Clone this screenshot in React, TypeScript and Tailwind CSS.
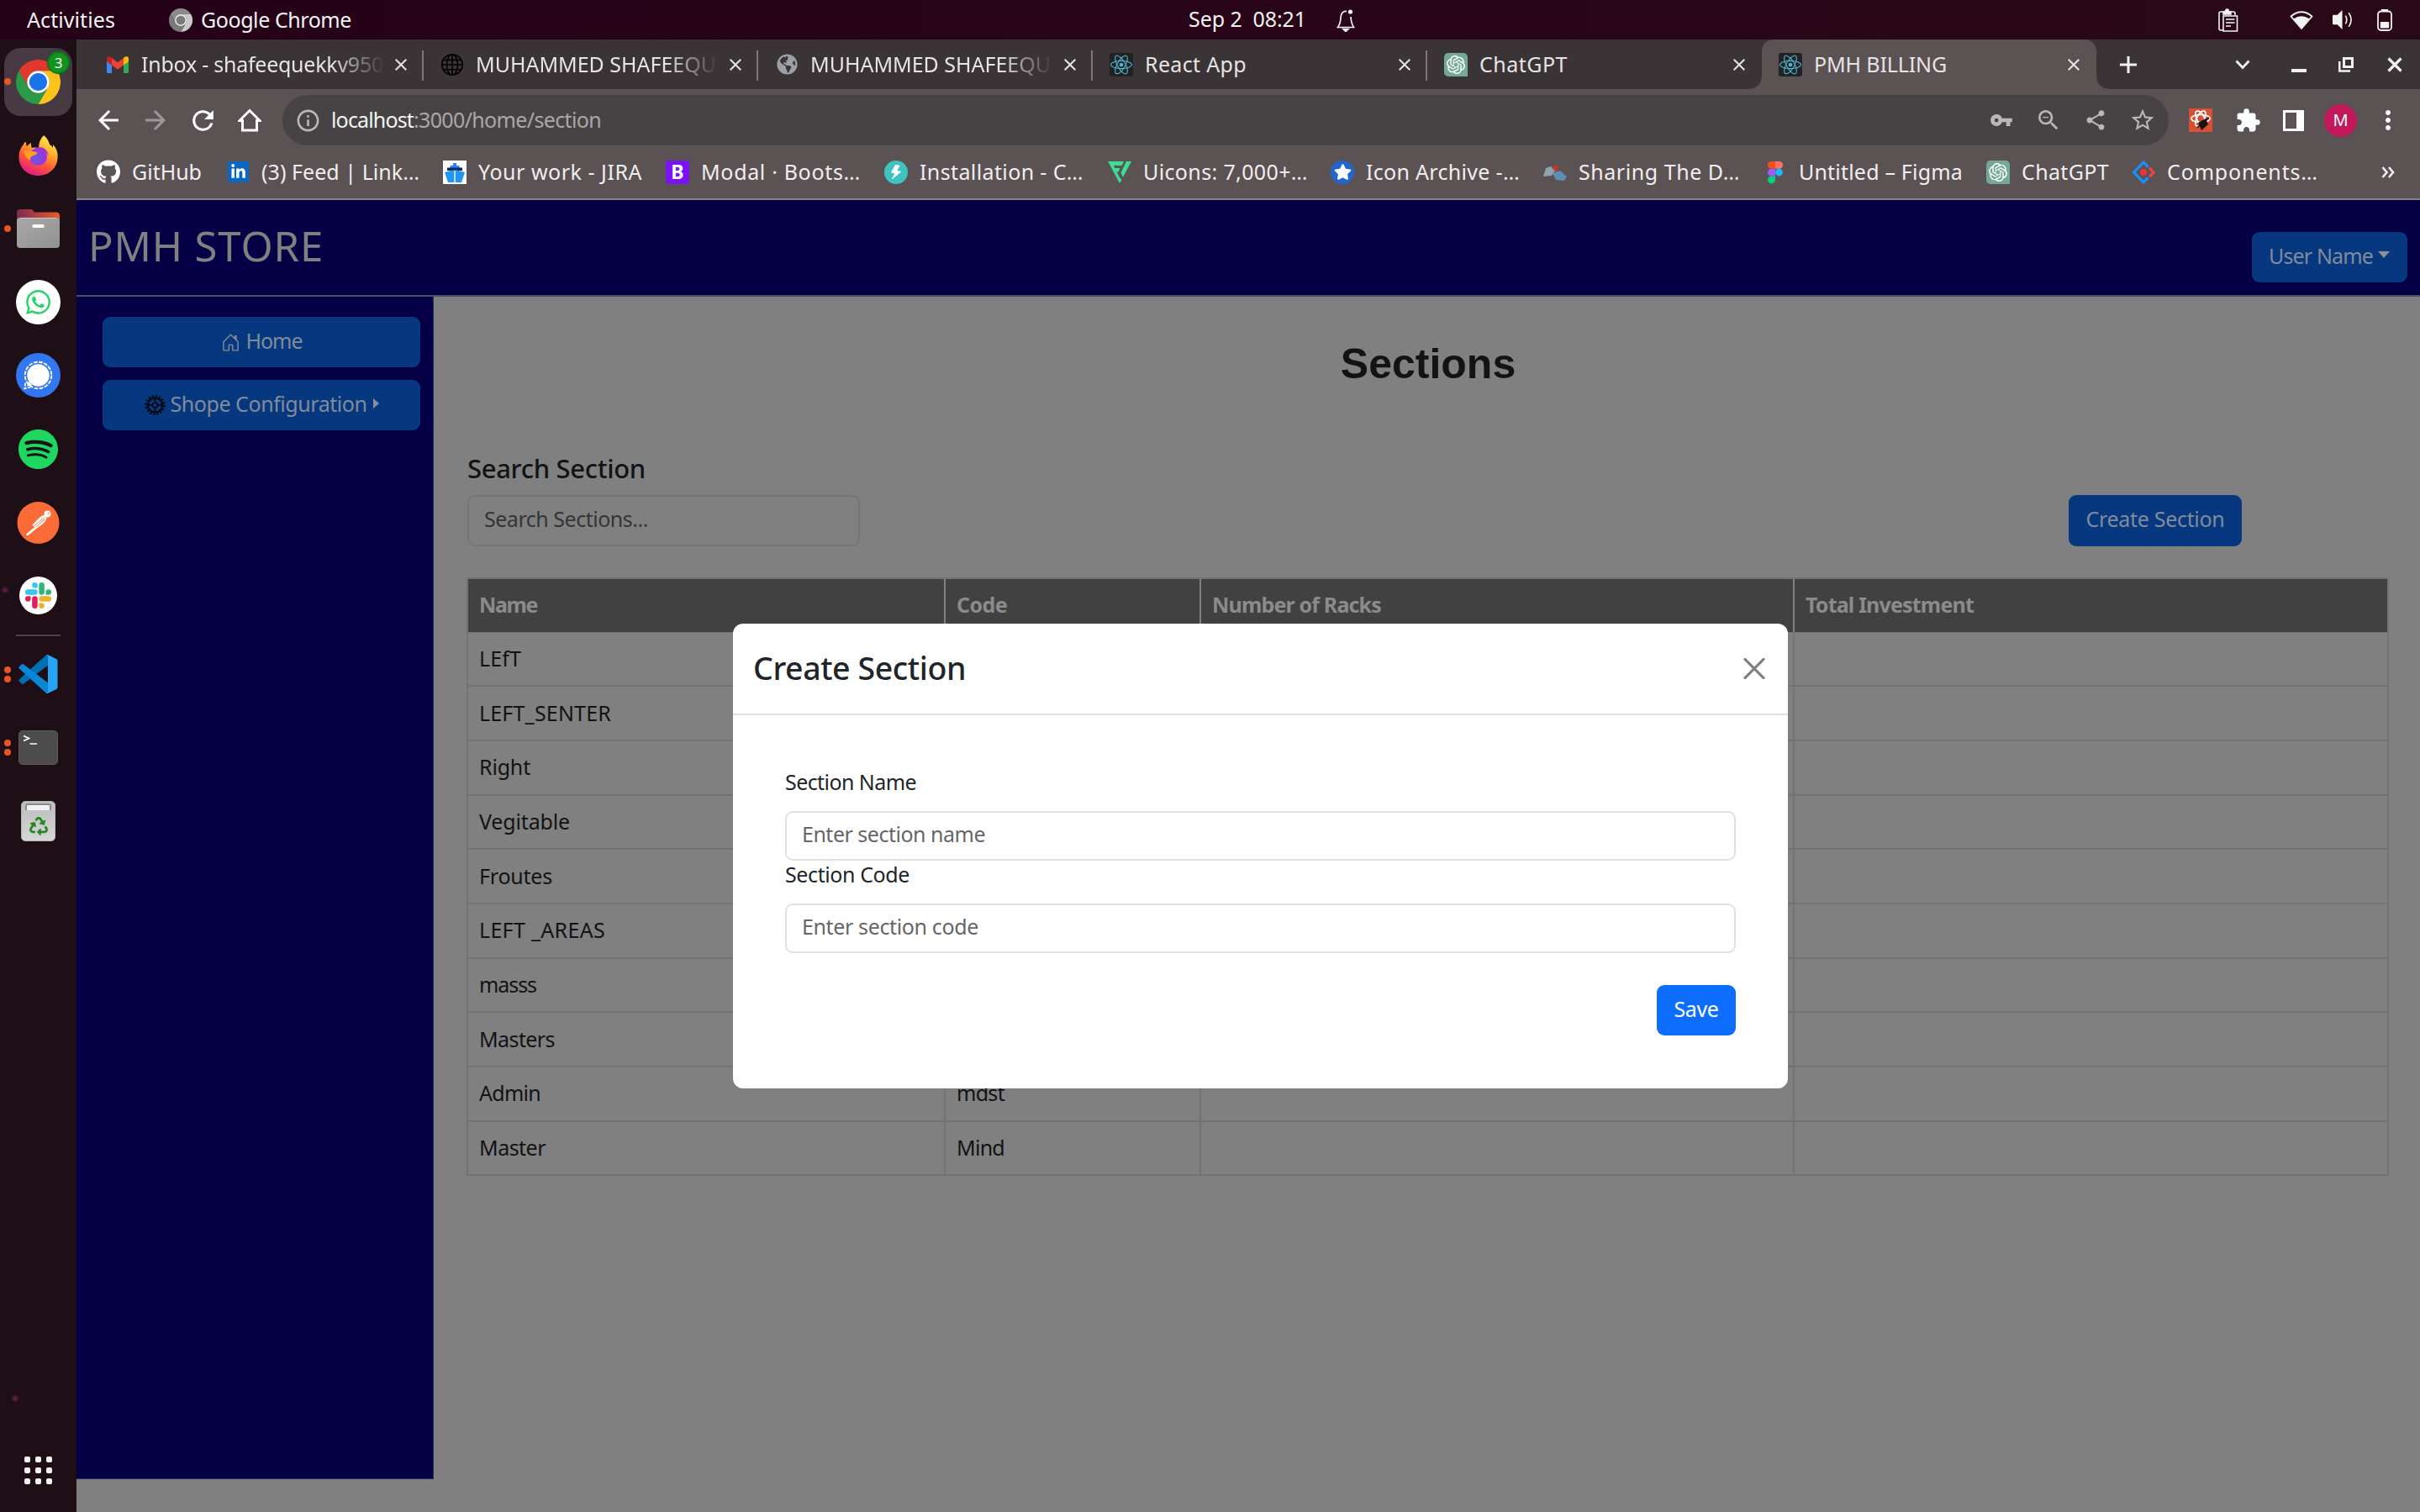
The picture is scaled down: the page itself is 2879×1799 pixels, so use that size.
import React, { useLayoutEffect, useRef, useState } from "react";
import { FaGithub, FaReact, FaRecycle, FaStar, FaLinkedinIn, FaGlobeAmericas, FaWhatsapp } from "react-icons/fa";
import { SiOpenai, SiSpotify } from "react-icons/si";
import { BsGlobe, BsFillLightningFill, BsHouseDoor } from "react-icons/bs";
import {
  MdArrowBack, MdArrowForward, MdRefresh, MdInfoOutline, MdVpnKey, MdZoomOut, MdShare,
  MdStarBorder, MdExtension, MdMoreVert, MdClose,
} from "react-icons/md";

/** Text whose letter spacing is tuned so the run takes exactly `w` pixels. */
function Fit({ w, className = "", children }: { w: number; className?: string; children: string }) {
  const ref = useRef<HTMLSpanElement>(null);
  const [ls, setLs] = useState(0);
  useLayoutEffect(() => {
    const el = ref.current;
    if (!el) return;
    el.style.letterSpacing = "0px";
    setLs((w - el.getBoundingClientRect().width) / children.length);
  }, [w, children]);
  return (
    <span ref={ref} className={"inline-block shrink-0 whitespace-pre " + className} style={{ letterSpacing: `${ls}px` }}>
      {children}
    </span>
  );
}

function ChromeLogo({ className = "", mono = false }: { className?: string; mono?: boolean }) {
  return (
    <svg viewBox="0 0 48 48" className={className}>
      <path d="M3.2 12A24 24 0 0 1 44.8 12H24A12 12 0 0 0 13.6 30Z" fill={mono ? "#8b8b8b" : "#e0382c"} />
      <path d="M44.8 12A24 24 0 0 1 24 48L34.4 30A12 12 0 0 0 24 12Z" fill={mono ? "#c9c9c9" : "#fcc31b"} />
      <path d="M24 48A24 24 0 0 1 3.2 12L13.6 30A12 12 0 0 0 34.4 30Z" fill={mono ? "#7a7a7a" : "#2a9a48"} />
      <circle cx="24" cy="24" r="12" fill="#fff" />
      <circle cx="24" cy="24" r="9.6" fill={mono ? "#7a7a7a" : "#1a73e8"} />
    </svg>
  );
}

function Firefox() {
  return (
    <svg viewBox="0 0 47 48" className="w-[47px] h-[48px]">
      <defs>
        <linearGradient id="ffa" x1=".8" y1="0" x2=".3" y2="1">
          <stop offset="0" stopColor="#fff44f" /><stop offset=".35" stopColor="#ffb02e" />
          <stop offset=".65" stopColor="#ff5a36" /><stop offset="1" stopColor="#e31587" />
        </linearGradient>
        <radialGradient id="ffb" cx=".4" cy=".6"><stop offset="0" stopColor="#6a5be0" /><stop offset="1" stopColor="#9b35d8" /></radialGradient>
      </defs>
      <path d="M30 0C34 3 36 7 37 11C39 12 40 13 41 15L41 11C46 16 47 22 46.500 27C46 39 36 48 23.500 48C10 48 0 38 .5 25C.7 19 3 14 6 11C6 10 7 8 9 8C9 11 9.500 12 10 13C12 11 13 10 15 9C15 12 15 13 16 15C20 14 22 15 24 15C24 9 26 4 30 0Z" fill="url(#ffa)" />
      <circle cx="23.500" cy="25.500" r="10.500" fill="url(#ffb)" />
      <path d="M6 19C10 17 16 19 22 20C23 22 21 23 18 24C15 25 14 26 14 30C10 28 8 24 6 19Z" fill="#ffa01e" />
      <path d="M20 15C28 12 35 17 36 25C34 21 32 20 30 19C26 18 22 18 20 15Z" fill="#a432d6" />
    </svg>
  );
}

function Files() {
  return (
    <svg viewBox="0 0 51 46" className="w-[51px] h-[46px]">
      <defs>
        <linearGradient id="fla"><stop offset="0" stopColor="#7d2a55" /><stop offset="1" stopColor="#e95b26" /></linearGradient>
        <linearGradient id="flb" x2="1" y2="1"><stop offset="0" stopColor="#a8a8a8" /><stop offset="1" stopColor="#919191" /></linearGradient>
      </defs>
      <path d="M0 4Q0 0 4 0H17Q19 0 21 3.500H47Q51 3.500 51 8V20H0Z" fill="url(#fla)" />
      <rect x="0" y="10" width="51" height="36" rx="4" fill="url(#flb)" />
      <path d="M4 10.500H47" stroke="#c9c9c9" strokeWidth="1" />
      <rect x="18.500" y="18" width="14" height="4" rx="1.500" fill="#fff" />
    </svg>
  );
}

function Signal() {
  return (
    <svg viewBox="0 0 52 52" className="w-[53px] h-[53px]">
      <circle cx="26" cy="26" r="26" fill="#3276f0" />
      <circle cx="26" cy="26" r="15.500" fill="none" stroke="#fff" strokeWidth="1.800" strokeDasharray="4.600 1.500" />
      <path d="M11 35L10 41.500L17 40" fill="none" stroke="#fff" strokeWidth="1.700" strokeDasharray="4 1.200" />
      <path d="M14.500 33L12.800 39L19 37.500Z" fill="#fff" />
      <circle cx="26" cy="26" r="13" fill="#fff" />
    </svg>
  );
}

function Postman() {
  return (
    <svg viewBox="0 0 50 50" className="w-[51px] h-[50px]">
      <circle cx="25" cy="25" r="25" fill="#f96b37" />
      <circle cx="36" cy="14.500" r="4" fill="#fff" />
      <path d="M36 14.500L39 12.500" stroke="#f96b37" strokeWidth="1" />
      <path d="M32 16L35 19.500C34 24 29 28 24 31L13 40H10.500L11 38L21 30L18 28C22 23 27 17 32 16Z" fill="#fff" />
      <path d="M20.500 28.500L32 19M22.500 30L33 20.500" stroke="#f96b37" strokeWidth=".9" />
    </svg>
  );
}

function Slack() {
  return (
    <span className="flex h-[45px] w-[45px] items-center justify-center rounded-full bg-white">
      <svg viewBox="0 0 24 24" className="h-[31px] w-[31px]">
        <path fill="#E01E5A" d="M5.042 15.165a2.528 2.528 0 0 1-2.520 2.523A2.528 2.528 0 0 1 0 15.165a2.527 2.527 0 0 1 2.522-2.520h2.520v2.520zM6.313 15.165a2.527 2.527 0 0 1 2.521-2.520 2.527 2.527 0 0 1 2.521 2.520v6.313A2.528 2.528 0 0 1 8.834 24a2.528 2.528 0 0 1-2.521-2.522v-6.313z" />
        <path fill="#36C5F0" d="M8.834 5.042a2.528 2.528 0 0 1-2.521-2.520A2.528 2.528 0 0 1 8.834 0a2.528 2.528 0 0 1 2.521 2.522v2.520H8.834zM8.834 6.313a2.528 2.528 0 0 1 2.521 2.521 2.528 2.528 0 0 1-2.521 2.521H2.522A2.528 2.528 0 0 1 0 8.834a2.528 2.528 0 0 1 2.522-2.521h6.312z" />
        <path fill="#2EB67D" d="M18.956 8.834a2.528 2.528 0 0 1 2.522-2.521A2.528 2.528 0 0 1 24 8.834a2.528 2.528 0 0 1-2.522 2.521h-2.522V8.834zM17.688 8.834a2.528 2.528 0 0 1-2.523 2.521 2.527 2.527 0 0 1-2.520-2.521V2.522A2.527 2.527 0 0 1 15.165 0a2.528 2.528 0 0 1 2.523 2.522v6.312z" />
        <path fill="#ECB22E" d="M15.165 18.956a2.528 2.528 0 0 1 2.523 2.522A2.528 2.528 0 0 1 15.165 24a2.527 2.527 0 0 1-2.520-2.522v-2.522h2.520zM15.165 17.688a2.527 2.527 0 0 1-2.520-2.523 2.526 2.526 0 0 1 2.520-2.520h6.313A2.527 2.527 0 0 1 24 15.165a2.528 2.528 0 0 1-2.522 2.523h-6.313z" />
      </svg>
    </span>
  );
}

function VSCode() {
  return (
    <svg viewBox="0 0 100 100" className="h-[46px] w-[47px]">
      <path fill="#0070b5" d="M96.500 10.800L75.900.9a6.200 6.200 0 0 0-7.100 1.200L1.300 63.600a4.170 4.170 0 0 0 0 6.200l5.500 5a4.170 4.170 0 0 0 5.300.2l81.200-61.600c2.700-2.100 6.700-.1 6.700 3.300v-.2a6.250 6.250 0 0 0-3.500-5.700z" />
      <path fill="#0a86d8" d="M96.500 89.200L75.900 99.100a6.200 6.200 0 0 1-7.100-1.200L1.300 36.400a4.170 4.170 0 0 1 0-6.200l5.500-5a4.170 4.170 0 0 1 5.300-.2l81.200 61.600c2.700 2.100 6.700.1 6.700-3.300v.2a6.250 6.250 0 0 1-3.500 5.700z" />
      <path fill="#27a5f5" d="M75.900 99.100a6.200 6.200 0 0 1-7.100-1.200c2.300 2.300 6.200.7 6.200-2.600V4.700c0-3.300-3.900-4.900-6.200-2.600a6.200 6.200 0 0 1 7.100-1.200l20.600 9.900a6.250 6.250 0 0 1 3.500 5.600v67.200a6.250 6.250 0 0 1-3.500 5.600z" />
    </svg>
  );
}

function Terminal() {
  return (
    <svg viewBox="0 0 47 41" className="h-[41px] w-[47px]">
      <rect x=".5" y=".5" width="46" height="40" rx="4.500" fill="#4c4c4c" stroke="#5c5c5c" />
      <path d="M6 6.500L12.500 9.500L6 12.500M13.500 16H22" fill="none" stroke="#fff" strokeWidth="1.700" />
    </svg>
  );
}

function Trash() {
  return (
    <span className="flex h-[48px] w-[41px] flex-col items-center rounded-[5px] border border-[#b5b5b5] bg-gradient-to-b from-[#bdbdbd] to-[#d6d6d6]">
      <span className="mt-[2px] h-[8px] w-[31px] rounded-t-[3px] border-2 border-b-0 border-[#8b8b8b] bg-[#f2f2f2]" />
      <FaRecycle className="mt-[8px] h-[22px] w-[22px] text-[#23891f]" />
    </span>
  );
}

const dock: { icon: React.ReactNode; dots: number; active?: boolean }[] = [
  { icon: <ChromeLogo className="h-[53px] w-[53px]" />, dots: 1, active: true },
  { icon: <Firefox />, dots: 0 },
  { icon: <Files />, dots: 1 },
  { icon: <span className="flex h-[53px] w-[53px] items-center justify-center rounded-full bg-white"><FaWhatsapp className="h-[33px] w-[33px] text-[#25d366]" /></span>, dots: 0 },
  { icon: <Signal />, dots: 0 },
  { icon: <span className="flex h-[47px] w-[47px] items-center justify-center rounded-full bg-[#191414]"><SiSpotify className="h-[47px] w-[47px] text-[#1ed760]" /></span>, dots: 0 },
  { icon: <Postman />, dots: 0 },
  { icon: <Slack />, dots: 0 },
  { icon: <VSCode />, dots: 2 },
  { icon: <Terminal />, dots: 2 },
  { icon: <Trash />, dots: 0 },
];

function DockItem({ item }: { item: (typeof dock)[number] }) {
  return (
    <div className="relative flex h-[87.4px] w-[91px] shrink-0 items-center justify-center">
      <div className={item.active ? "flex h-[81px] w-[81px] items-center justify-center rounded-[20px] bg-[#483a43]" : "flex items-center justify-center"}>{item.icon}</div>
      <div className="absolute inset-y-0 left-[5px] flex flex-col justify-center gap-[3px]">
        {Array.from({ length: item.dots }, (_, i) => <span key={i} className="h-[8px] w-[8px] rounded-full bg-[#ea5622]" />)}
      </div>
      {item.active && (
        <span className="absolute left-[56px] top-[7px] flex h-[27px] w-[27px] items-center justify-center rounded-full border-2 border-[#0b7a1c] bg-[#12941f] text-[17px] leading-none text-white shadow">3</span>
      )}
    </div>
  );
}

function ReactIcon() {
  return <span className="flex h-[28px] w-[28px] items-center justify-center rounded-[3px] bg-[#222]"><FaReact className="h-[26px] w-[26px] text-[#4fb8d6]" /></span>;
}
function OpenAiIcon() {
  return <span className="flex h-[28px] w-[28px] items-center justify-center rounded-[5px] rounded-br-none bg-[#74a898]"><SiOpenai className="h-[22px] w-[22px] text-white" /></span>;
}
function Gmail() {
  return (
    <svg viewBox="0 0 26 20" className="h-[20px] w-[26px]">
      <path d="M0 3V18.500Q0 20 1.500 20H6V8Z" fill="#4285f4" />
      <path d="M26 3V18.500Q26 20 24.500 20H20V8Z" fill="#34a853" />
      <path d="M20 2L22 .6Q26-1 26 3V6L20 10.500Z" fill="#fbbc04" />
      <path d="M6 2L4 .6Q0-1 0 3V6L6 10.500Z" fill="#c5221f" />
      <path d="M6 2L13 7.300L20 2V10.500L13 15.700L6 10.500Z" fill="#ea4335" />
    </svg>
  );
}

const tabs: { icon: React.ReactNode; title: string; w: number }[] = [
  { icon: <Gmail />, title: "Inbox - shafeequekkv950", w: 288 },
  { icon: <BsGlobe className="h-[26px] w-[26px] text-black" />, title: "MUHAMMED SHAFEEQU", w: 286 },
  { icon: <FaGlobeAmericas className="h-[25px] w-[25px] text-[#9aa0a6]" />, title: "MUHAMMED SHAFEEQU", w: 286 },
  { icon: <ReactIcon />, title: "React App", w: 121 },
  { icon: <OpenAiIcon />, title: "ChatGPT", w: 105 },
  { icon: <ReactIcon />, title: "PMH BILLING", w: 158 },
];

const bookmarks: { cell: string; icon: React.ReactNode; title: string; w: number }[] = [
  { cell: "w-[154px]", icon: <FaGithub className="h-[29px] w-[29px] text-white" />, title: "GitHub", w: 83 },
  { cell: "w-[258px]", icon: <span className="flex h-[25px] w-[25px] items-center justify-center bg-[#0a66c2]"><FaLinkedinIn className="h-[19px] w-[19px] text-white" /></span>, title: "(3) Feed | Link…", w: 188 },
  {
    cell: "w-[265px]", title: "Your work - JIRA", w: 195,
    icon: (
      <svg viewBox="0 0 28 28" className="h-[28px] w-[28px]"><rect width="28" height="28" fill="#fff" /><path d="M9 6H12V3H16V6H19L20 9H8Z" fill="#2684ff" /><path d="M5 8.500H23V12H5Z" fill="#0b2a5b" /><path d="M2 14L13.300 11V26H6Z" fill="#2196f3" /><path d="M26 14L14.700 11V26H22Z" fill="#2196f3" /></svg>
    ),
  },
  { cell: "w-[260px]", icon: <span className="flex h-[28px] w-[28px] items-center justify-center rounded-[4px] bg-[#7a12f5] text-[23px] font-bold leading-none text-white">B</span>, title: "Modal · Boots…", w: 190 },
  { cell: "w-[266px]", icon: <span className="flex h-[28px] w-[28px] items-center justify-center rounded-full bg-[#3fc3c0]"><BsFillLightningFill className="h-[18px] w-[18px] rotate-12 text-white" /></span>, title: "Installation - C…", w: 195 },
  {
    cell: "w-[265px]", title: "Uicons: 7,000+…", w: 196,
    icon: <svg viewBox="0 0 28 28" className="h-[28px] w-[28px]"><path d="M0 1H19L16.500 6H7L8.200 9H14.500L12.500 13.500H10.500L14.500 21L16.500 23L14 27Z" fill="#3ddc97" /><path d="M22 1H28L18 20L15.500 14.500Z" fill="#3ddc97" /></svg>,
  },
  { cell: "w-[253px]", icon: <span className="flex h-[28px] w-[28px] items-center justify-center rounded-full bg-[#2065d0]"><FaStar className="h-[21px] w-[21px] text-white" /></span>, title: "Icon Archive -…", w: 183 },
  {
    cell: "w-[262px]", title: "Sharing The D…", w: 192,
    icon: <svg viewBox="0 0 28 24" className="h-[24px] w-[28px]"><path d="M0 17L3 7L9 5L14 10L10 16Z" fill="#8fa3b0" /><path d="M11 13L20 10L28 17L25 22L15 21Z" fill="#5d8fb5" /><path d="M14 1L15.500 6L19 4L17 9L20 11L14 10L10 7L13 6Z" fill="#c9342c" /></svg>,
  },
  {
    cell: "w-[265px]", title: "Untitled – Figma", w: 195,
    icon: <svg viewBox="0 0 28 28" className="h-[28px] w-[28px]"><path d="M14 1H9.500a4.500 4.300 0 0 0 0 8.700H14Z" fill="#f24e1e" /><path d="M14 1h4.500a4.500 4.300 0 0 1 0 8.700H14Z" fill="#ff7262" /><path d="M14 9.700H9.500a4.500 4.300 0 0 0 0 8.700H14Z" fill="#a259ff" /><circle cx="18.500" cy="14" r="4.400" fill="#1abcfe" /><path d="M14 18.400H9.500a4.500 4.500 0 1 0 4.500 4.500Z" fill="#0acf83" /></svg>,
  },
  { cell: "w-[173px]", icon: <OpenAiIcon />, title: "ChatGPT", w: 104 },
  {
    cell: "w-[240px]", title: "Components…", w: 180,
    icon: <svg viewBox="0 0 28 28" className="h-[28px] w-[28px]"><path d="M19.500 7.500L14 2.200L2.500 14L14 25.800L19.500 20.500" fill="none" stroke="#1890ff" strokeWidth="3.200" /><path d="M21 8.500L26 14L21 19.500" fill="none" stroke="#f5404a" strokeWidth="3.200" /><circle cx="14" cy="14" r="3.900" fill="#f5303a" /></svg>,
  },
];

const columns: { cell: string; title: string; w: number }[] = [
  { cell: "w-[568px]", title: "Name", w: 69 },
  { cell: "w-[304px]", title: "Code", w: 60 },
  { cell: "w-[706px]", title: "Number of Racks", w: 201 },
  { cell: "w-[707px]", title: "Total Investment", w: 200 },
];

const rows: { name: string; w: number; code?: string; cw?: number }[] = [
  { name: "LEfT", w: 50 },
  { name: "LEFT_SENTER", w: 157 },
  { name: "Right", w: 61 },
  { name: "Vegitable", w: 108 },
  { name: "Froutes", w: 87 },
  { name: "LEFT _AREAS", w: 150 },
  { name: "masss", w: 68 },
  { name: "Masters", w: 90 },
  { name: "Admin", w: 73, code: "mdst", cw: 57 },
  { name: "Master", w: 79, code: "Mind", cw: 57 },
];

function TopBar() {
  return (
    <div className="flex h-[47px] shrink-0 items-center bg-gradient-to-r from-[#250118] to-[#2a0917] text-[25px] leading-none text-[#f2f2f2]">
      <div className="flex w-[1414px] items-center pl-[32px]">
        <Fit w={105}>Activities</Fit>
        <ChromeLogo mono className="ml-[64px] h-[28px] w-[28px]" />
        <Fit w={179} className="ml-[10px]">Google Chrome</Fit>
      </div>
      <Fit w={140} className="pb-[3px]">{"Sep 2  08:21"}</Fit>
      <svg viewBox="0 0 22 28" className="ml-[36px] h-[28px] w-[22px]" fill="none" stroke="#f2f2f2" strokeWidth="1.700">
        <path d="M12 3.500Q5.500 3 5 11Q4.800 18 1.500 22.500H20.500Q17.500 18 17 10" /><path d="M8 24.500H14L11 27.500Z" fill="#f2f2f2" /><circle cx="16.500" cy="4" r="2.600" fill="#f2f2f2" stroke="none" />
      </svg>
      <div className="ml-auto flex items-center pr-[33px]">
        <svg viewBox="0 0 24 28" className="h-[28px] w-[24px]" fill="none" stroke="#f2f2f2" strokeWidth="1.600">
          <path d="M6 26H3Q1 26 1 24V6Q1 4 3 4H18Q20 4 20 6V8" /><path d="M6 9H22.500V27H6ZM9 13H19.500M9 17H19.500M9 21H15" /><path d="M6 7V4H8.500Q8.500 1 10.500 1T12.500 4H15V7Z" fill="#f2f2f2" />
        </svg>
        <svg viewBox="0 0 28 22" className="ml-[61px] h-[24px] w-[28px]"><path d="M1.500 6.500Q14-4 26.500 6.500L14 21Z" fill="none" stroke="#f2f2f2" strokeWidth="1.800" strokeLinejoin="round" /><path d="M4.500 9.500Q14 3 23.500 9.500L14 21Z" fill="#f2f2f2" /></svg>
        <svg viewBox="0 0 28 26" className="ml-[22px] h-[25px] w-[27px]" fill="none" stroke="#f2f2f2" strokeWidth="1.700"><path d="M1 8Q1 7 2 7H7L13 1V25L7 19H2Q1 19 1 18Z" fill="#f2f2f2" stroke="none" /><path d="M17 8Q20 13 17 18M21 4.500Q27 13 21 21.500" /></svg>
        <svg viewBox="0 0 18 26" className="ml-[27px] h-[26px] w-[18px]"><rect x="5" y="0" width="8" height="3" fill="#f2f2f2" /><rect x="1" y="2.500" width="16" height="22.500" rx="3.500" fill="none" stroke="#f2f2f2" strokeWidth="1.800" /><rect x="3.800" y="15" width="10.400" height="7.500" rx="1" fill="#f2f2f2" /></svg>
      </div>
    </div>
  );
}

function TabStrip() {
  return (
    <div className="flex h-[59px] shrink-0 items-center bg-[#3a3436] pl-[15px] text-[25px] leading-none text-[#e6e4e4]">
      {tabs.map((t, i) => {
        const active = i === 5;
        return (
          <div key={i} className={"relative flex h-[59px] w-[398px] shrink-0 items-center pl-[19px] " + (active ? "rounded-t-[14px] bg-[#5b5254]" : "")}>
            <span className="flex w-[30px] shrink-0 items-center justify-center">{t.icon}</span>
            <span className={"ml-[13px] flex h-[40px] w-[289px] shrink-0 items-center " + (i < 3 ? "[mask-image:linear-gradient(to_right,black_78%,transparent)]" : "")}>
              <Fit w={t.w}>{t.title}</Fit>
            </span>
            <MdClose className="ml-[8px] h-[24px] w-[24px] shrink-0" />
            {i < 4 && <span className="absolute right-0 top-[13px] h-[36px] w-[2px] bg-[#7b7677]" />}
            {active && (
              <>
                <span className="absolute -left-[14px] bottom-0 h-[14px] w-[14px] bg-[radial-gradient(circle_at_0_0,#3a3436_13px,#5b5254_14px)]" />
                <span className="absolute -right-[14px] bottom-0 h-[14px] w-[14px] bg-[radial-gradient(circle_at_100%_0,#3a3436_13px,#5b5254_14px)]" />
              </>
            )}
          </div>
        );
      })}
      <svg viewBox="0 0 22 22" className="ml-[27px] h-[22px] w-[22px]"><path d="M11 1V21M1 11H21" stroke="#f0f0f0" strokeWidth="3" /></svg>
      <svg viewBox="0 0 18 12" className="ml-[116px] h-[12px] w-[18px]"><path d="M1.500 1.500L9 9.500L16.500 1.500" fill="none" stroke="#f0f0f0" strokeWidth="2.800" /></svg>
      <span className="ml-[49px] mt-[14px] h-[4px] w-[18px] bg-[#f0f0f0]" />
      <svg viewBox="0 0 18 18" className="ml-[38px] h-[18px] w-[18px]" fill="none" stroke="#f0f0f0"><rect x="6.500" y="1.500" width="10" height="10" strokeWidth="3" /><path d="M1.200 5V16.500H14" strokeWidth="2.600" /></svg>
      <svg viewBox="0 0 18 18" className="ml-[40px] h-[18px] w-[18px]"><path d="M1.500 1.500L16.500 16.500M16.500 1.500L1.500 16.500" stroke="#f0f0f0" strokeWidth="3.200" /></svg>
    </div>
  );
}

function Toolbar() {
  return (
    <div className="flex h-[67px] shrink-0 items-center bg-[#5b5254] pt-[7px] text-white">
      <div className="flex w-[245px] items-center gap-[20px] pl-[20px]">
        <MdArrowBack className="h-[36px] w-[36px]" />
        <MdArrowForward className="h-[36px] w-[36px] text-[#9c9798]" />
        <MdRefresh className="h-[37px] w-[37px]" />
        <svg viewBox="0 0 28 28" className="ml-[3px] h-[28px] w-[28px]"><path d="M2 14.500L14 2.500L26 14.500H22.500V26H5.500V14.500Z" fill="none" stroke="#fff" strokeWidth="3" /></svg>
      </div>
      <div className="flex h-[60px] w-[2244px] shrink-0 items-center rounded-full bg-[#474344] pl-[15px] pr-[15px] text-[25px] leading-none text-[#bab7b7]">
        <MdInfoOutline className="h-[31px] w-[31px]" />
        <Fit w={98} className="ml-[12px] pb-[2px] text-[#f2f2f2]">localhost</Fit>
        <Fit w={223} className="pb-[2px] text-[#a9a7a7]">:3000/home/section</Fit>
        <div className="ml-auto flex items-center gap-[26px]">
          <MdVpnKey className="h-[28px] w-[28px]" />
          <MdZoomOut className="h-[32px] w-[32px]" />
          <MdShare className="h-[28px] w-[28px]" />
          <MdStarBorder className="h-[32px] w-[32px]" />
        </div>
      </div>
      <span className="ml-[24px] flex h-[28px] w-[28px] items-center justify-center bg-[#d94f34]">
        <svg viewBox="0 0 28 28" className="h-[28px] w-[28px]" fill="none" stroke="#fff" strokeWidth="1.700"><ellipse cx="14" cy="12" rx="11" ry="4.500" /><ellipse cx="14" cy="12" rx="4.500" ry="10" transform="rotate(28 14 12)" /><ellipse cx="14" cy="12" rx="4.500" ry="10" transform="rotate(-28 14 12)" /><path d="M11 17L20 12L23 19L15 26Z" fill="#1c1311" stroke="none" /><path d="M19 15L24 11M13 20L10 23" stroke="#1c1311" /></svg>
      </span>
      <MdExtension className="ml-[27px] h-[31px] w-[31px]" />
      <span className="ml-[26px] h-[25px] w-[25px] border-[3px] border-r-[9px] border-white" />
      <span className="ml-[24px] flex h-[39px] w-[39px] items-center justify-center rounded-full bg-[#c2185b] text-[20px] leading-none">M</span>
      <MdMoreVert className="ml-[19px] h-[36px] w-[36px]" />
    </div>
  );
}

function Bookmarks() {
  return (
    <div className="flex h-[65px] shrink-0 items-center border-b-2 border-[#8a8384] bg-[#5b5254] pl-[24px] text-[25px] leading-none text-[#f0eeee]">
      {bookmarks.map((b, i) => (
        <div key={i} className={"flex shrink-0 items-center " + b.cell}>
          <span className="flex w-[28px] shrink-0 items-center justify-center">{b.icon}</span>
          <Fit w={b.w} className="ml-[14px] pb-[1px]">{b.title}</Fit>
        </div>
      ))}
      <svg viewBox="0 0 16 14" className="ml-[57px] h-[14px] w-[16px]" fill="none" stroke="#f0eeee" strokeWidth="2.600"><path d="M1.500 1L6.500 7L1.500 13M9 1L14 7L9 13" /></svg>
    </div>
  );
}

function SectionsPage() {
  return (
    <main className="flex min-w-0 flex-1 flex-col bg-[#808080] pl-[40px]">
      <h1 className="mt-[48px] h-[64px] w-[2286px] text-center font-['Liberation_Sans',sans-serif] text-[50px] font-bold leading-[64px] text-[#111315]">Sections</h1>
      <h5 className="mt-[70px] h-[44px] text-[31px] font-medium leading-[44px] text-[#111315]"><Fit w={212}>Search Section</Fit></h5>
      <div className="mt-[10px] flex h-[61px] w-[2285px] items-center">
        <div className="flex h-[61px] w-[467px] items-center rounded-[9px] border-2 border-[#737577] pb-[4px] pl-[18px] text-[25px] leading-none text-[#333537]">
          <Fit w={195}>Search Sections...</Fit>
        </div>
        <button className="ml-auto mr-[174px] flex h-[61px] w-[206px] items-center justify-center rounded-[9px] bg-[#06377f] pb-[4px] text-[25px] leading-none text-[#808c9a]">
          <Fit w={165}>Create Section</Fit>
        </button>
      </div>
      <div className="-ml-px mt-[37px] w-[2287px] border-l-2 border-t-2 border-[#717375] text-[25px] leading-none text-[#111315]">
        <div className="flex h-[63.5px] border-b border-[#717375] bg-[#414141] font-bold text-[#8b8b8b]">
          {columns.map((c) => (
            <div key={c.title} className={"flex shrink-0 items-center border-r-2 border-[#808080] pb-[2px] pl-[13px] last:border-[#717375] " + c.cell}>
              <Fit w={c.w}>{c.title}</Fit>
            </div>
          ))}
        </div>
        {rows.map((r) => (
          <div key={r.name} className="flex h-[64.7px] border-b-2 border-[#717375]">
            {columns.map((c, i) => (
              <div key={c.title} className={"flex shrink-0 items-center border-r-2 border-[#717375] pb-[1px] pl-[13px] " + c.cell}>
                {i === 0 && <Fit w={r.w}>{r.name}</Fit>}
                {i === 1 && r.code && <Fit w={r.cw ?? 57}>{r.code}</Fit>}
              </div>
            ))}
          </div>
        ))}
      </div>
    </main>
  );
}

function CreateSectionModal() {
  return (
    <div className="absolute left-[781px] top-[504px] flex h-[553px] w-[1255px] flex-col rounded-[12px] bg-white text-[25px] leading-none text-[#212529]">
      <div className="flex h-[109px] items-center border-b-2 border-[#dee2e6] pl-[24px] pr-[27px]">
        <Fit w={253} className="pb-[2px] text-[37.500px] font-medium">Create Section</Fit>
        <svg viewBox="0 0 26 26" className="ml-auto h-[25px] w-[26px]"><path d="M1.500 1.500L24.500 24.500M24.500 1.500L1.500 24.500" stroke="#7f7f7f" strokeWidth="3.200" strokeLinecap="round" /></svg>
      </div>
      <div className="flex flex-col px-[62px] pt-[59px]">
        <label className="flex h-[40px] items-center"><Fit w={156}>Section Name</Fit></label>
        <div className="mt-[15px] flex h-[59px] items-center rounded-[9px] border-2 border-[#dee2e6] pb-[4px] pl-[18px] text-[#63676b]"><Fit w={218}>Enter section name</Fit></div>
        <label className="mt-[-4px] flex h-[40px] items-center"><Fit w={148}>Section Code</Fit></label>
        <div className="mt-[15px] flex h-[59px] items-center rounded-[9px] border-2 border-[#dee2e6] pb-[4px] pl-[18px] text-[#63676b]"><Fit w={210}>Enter section code</Fit></div>
        <button className="ml-auto mt-[38px] flex h-[60px] w-[94px] items-center justify-center rounded-[9px] bg-[#0d6efd] pb-[4px] text-white"><Fit w={53}>Save</Fit></button>
      </div>
    </div>
  );
}

export default function App() {
  return (
    <div className="flex h-[1799px] w-[2879px] flex-col overflow-hidden font-['Noto_Sans','Open_Sans',sans-serif]">
      <TopBar />
      <div className="flex min-h-0 flex-1">
        <nav className="relative flex w-[91px] shrink-0 flex-col items-center bg-[#1e0f17] pt-[6.500px]">
          {dock.slice(0, 8).map((d, i) => <DockItem key={i} item={d} />)}
          <span className="my-[2px] h-[2px] w-[53px] shrink-0 bg-[#4b4146]" />
          {dock.slice(8).map((d, i) => <DockItem key={i} item={d} />)}
          <div className="mb-[33px] mt-auto grid grid-cols-3 gap-[6px]">
            {Array.from({ length: 9 }, (_, i) => <span key={i} className="h-[7px] w-[7px] rounded-[2px] bg-[#f2f2f2]" />)}
          </div>
          <span className="absolute left-[1px] top-[650px] h-[10px] w-[10px] rounded-full bg-[radial-gradient(circle,#6b1f5c,transparent_70%)]" />
          <span className="absolute left-[13px] top-[1612px] h-[10px] w-[10px] rounded-full bg-[radial-gradient(circle,#6b2552,transparent_70%)]" />
        </nav>
        <div className="flex min-w-0 flex-1 flex-col">
          <TabStrip />
          <Toolbar />
          <Bookmarks />
          <div className="relative flex min-h-0 flex-1 flex-col bg-[#808080]">
            <header className="flex h-[115px] shrink-0 border-b-2 border-[#47526a] bg-[#050046] pl-[14px] pr-[15px]">
              <Fit w={280} className="mt-[22px] h-[64px] text-[49px] leading-[64px] text-[#808080]">PMH STORE</Fit>
              <button className="ml-auto mt-[38px] flex h-[60px] w-[185px] items-center rounded-[9px] bg-[#06377f] pb-[4px] pl-[20px] text-[25px] leading-none text-[#808c9a]">
                <Fit w={124}>User Name</Fit>
                <span className="ml-[6px] mt-[-2px] border-x-[7px] border-t-[8px] border-x-transparent border-t-[#8c9096]" />
              </button>
            </header>
            <div className="flex min-h-0 flex-1">
              <aside className="flex h-[1407px] w-[425px] shrink-0 flex-col gap-[15px] border-b border-r border-[#2c2a5c] bg-[#050046] pl-[31px] pt-[24px] text-[25px] leading-none text-[#808c9a]">
                <button className="flex h-[60px] w-[378px] items-center justify-center rounded-[9px] bg-[#06377f] pb-[4px]">
                  <BsHouseDoor className="mr-[7px] mt-[4px] h-[23px] w-[23px]" />
                  <Fit w={67}>Home</Fit>
                </button>
                <button className="flex h-[60px] w-[378px] items-center justify-center rounded-[9px] bg-[#06377f] pb-[4px]">
                  <svg viewBox="0 0 26 26" className="mr-[6px] mt-[4px] h-[26px] w-[25px]" fill="none" stroke="#020a14">
                    <circle cx="13" cy="13" r="9" strokeWidth="2.400" /><circle cx="13" cy="13" r="11.300" strokeWidth="2.600" strokeDasharray="2.300 2.140" /><circle cx="13" cy="13" r="3" strokeWidth="2" /><path d="M13 3V10M13 16V23M3 13H10M16 13H23" strokeWidth="2" />
                  </svg>
                  <Fit w={234}>Shope Configuration</Fit>
                  <span className="ml-[7px] border-y-[6.500px] border-l-[7px] border-y-transparent border-l-[#8c9096]" />
                </button>
              </aside>
              <SectionsPage />
            </div>
            <CreateSectionModal />
          </div>
        </div>
      </div>
    </div>
  );
}
